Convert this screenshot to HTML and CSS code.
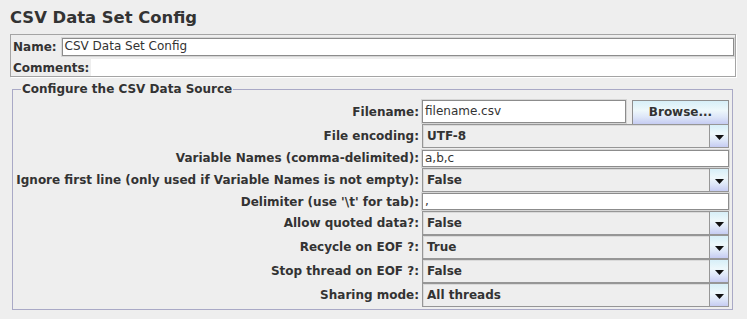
FILE: index.html
```html
<!DOCTYPE html>
<html lang="en">

<head>
    <meta charset="UTF-8" />
    <meta name="viewport" content="width=device-width, initial-scale=1.0" />
    <title>CSV Data Set Config</title>
    <link rel="stylesheet" href="styles.css">
</head>

<body>
    <div class="page">
        <h1 class="title">CSV Data Set Config</h1>

        <div class="name-panel">
            <div class="name-row">
                <span class="lbl">Name:</span>
                <div class="text-field name-field">CSV Data Set Config</div>
            </div>
            <div class="comments-row">
                <span class="lbl">Comments:</span>
                <div class="comments-area"></div>
            </div>
        </div>

        <fieldset class="source">
            <legend>Configure the CSV Data Source</legend>
            <div class="form">
                <div class="lbl">Filename:</div>
                <div class="file-cell">
                    <div class="text-field file-field">filename.csv</div>
                    <div class="button">Browse...</div>
                </div>

                <div class="lbl">File encoding:</div>
                <div class="combo"><span class="combo-value">UTF-8</span><span class="arrow"><svg width="9" height="5" viewBox="0 0 9 5"><path d="M0 0H9L4.5 5Z" fill="#111"/></svg></span></div>

                <div class="lbl">Variable Names (comma-delimited):</div>
                <div class="text-field line first">a,b,c</div>

                <div class="lbl">Ignore first line (only used if Variable Names is not empty):</div>
                <div class="combo"><span class="combo-value">False</span><span class="arrow"><svg width="9" height="5" viewBox="0 0 9 5"><path d="M0 0H9L4.5 5Z" fill="#111"/></svg></span></div>

                <div class="lbl">Delimiter (use '\t' for tab):</div>
                <div class="text-field line">,</div>

                <div class="lbl">Allow quoted data?:</div>
                <div class="combo"><span class="combo-value">False</span><span class="arrow"><svg width="9" height="5" viewBox="0 0 9 5"><path d="M0 0H9L4.5 5Z" fill="#111"/></svg></span></div>

                <div class="lbl">Recycle on EOF ?:</div>
                <div class="combo"><span class="combo-value">True</span><span class="arrow"><svg width="9" height="5" viewBox="0 0 9 5"><path d="M0 0H9L4.5 5Z" fill="#111"/></svg></span></div>

                <div class="lbl">Stop thread on EOF ?:</div>
                <div class="combo"><span class="combo-value">False</span><span class="arrow"><svg width="9" height="5" viewBox="0 0 9 5"><path d="M0 0H9L4.5 5Z" fill="#111"/></svg></span></div>

                <div class="lbl">Sharing mode:</div>
                <div class="combo"><span class="combo-value">All threads</span><span class="arrow"><svg width="9" height="5" viewBox="0 0 9 5"><path d="M0 0H9L4.5 5Z" fill="#111"/></svg></span></div>
            </div>
        </fieldset>
    </div>
</body>

</html>
```

FILE: styles.css
```css
* {
    margin: 0;
    padding: 0;
    box-sizing: border-box;
}

body {
    background: #eeeeee;
    color: #333333;
    font-family: "DejaVu Sans", sans-serif;
    font-size: 12px;
}

.page {
    padding: 8px 11px 0 10px;
}

.title {
    font-size: 16.4px;
    font-weight: bold;
    line-height: 20px;
    height: 26px;
}

.lbl {
    font-weight: bold;
    white-space: nowrap;
}

/* name + comments block */
.name-panel {
    border: 1px solid #a4a4a4;
    box-shadow: 1px 1px 0 #ffffff;
    padding: 1px 1px 0 2px;
}

.name-row {
    display: flex;
    align-items: center;
    gap: 5px;
    height: 21px;
}

.name-field {
    flex: 1;
    height: 18px;
}

.comments-row {
    display: flex;
    align-items: center;
    gap: 2px;
    height: 17px;
    margin-top: 2px;
}

.comments-area {
    flex: 1;
    height: 100%;
    background: #ffffff;
    margin-right: -1px;
}

.text-field {
    background: #ffffff;
    border: 1px solid #8c8c8c;
    box-shadow: 0 0 0 1px #d6d6d6;
    padding-left: 2px;
    line-height: 15px;
    white-space: nowrap;
    overflow: hidden;
}

/* data source fieldset */
.source {
    margin: 4px 3px 0 2px;
    border: 1px solid #a9a9c6;
    padding: 3px 3px 2px 3px;
}

.source legend {
    font-weight: bold;
    font-size: 12px;
    line-height: 16px;
    margin-left: 5px;
    padding: 0 1px;
}

.form {
    display: grid;
    grid-template-columns: 1fr 307px;
    column-gap: 3px;
    align-items: center;
}

.form .lbl {
    text-align: right;
}

.file-cell {
    display: flex;
    align-items: flex-start;
    justify-content: space-between;
    height: 24px;
}

.file-field {
    width: 204px;
    height: 23px;
    line-height: 21px;
}

.button {
    width: 97px;
    height: 25px;
    margin-bottom: -1px;
    border: 1px solid #8e8e8e;
    background: linear-gradient(#d7eff8, #eef8fb 40%, #dde6f8 70%, #c6ccf2);
    font-weight: bold;
    text-align: center;
    line-height: 23px;
}

.line {
    height: 17px;
    margin: 1px 0;
}

.line.first {
    margin-top: 2px;
}

.combo {
    display: flex;
    height: 24px;
    border: 1px solid #969696;
    box-shadow: inset 1px 1px 0 #dadada;
    background: #eeeeee;
}

.combo-value {
    flex: 1;
    font-weight: bold;
    line-height: 22px;
    padding-left: 4px;
}

.arrow {
    width: 19px;
    border-left: 1px solid #969696;
    background: linear-gradient(#d7eff8, #eef8fb 40%, #dde6f8 70%, #c6ccf2);
    display: flex;
    align-items: center;
    justify-content: center;
    padding-top: 3px;
}
```
